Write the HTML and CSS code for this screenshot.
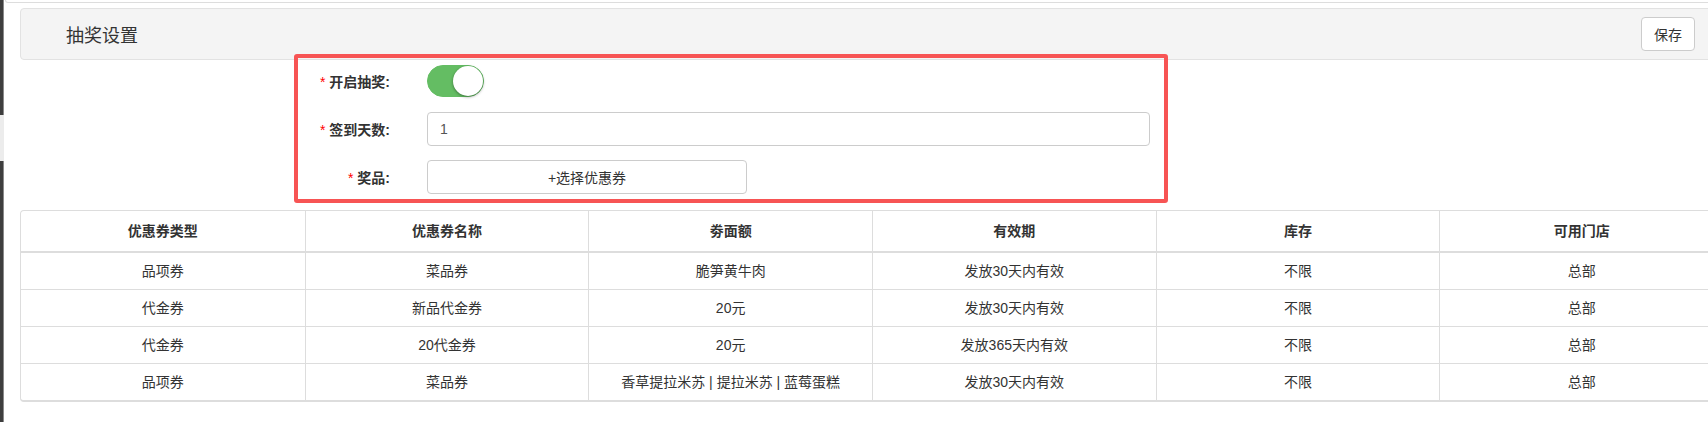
FILE: index.html
```html
<!DOCTYPE html>
<html lang="zh-CN">
<head>
<meta charset="UTF-8">
<meta name="viewport" content="width=device-width, initial-scale=1.0">
<title>抽奖设置</title>
<link rel="stylesheet" href="styles.css">
</head>
<body>

<div class="page">
    <div class="edge">
        <div class="edge-dark edge-top"></div>
        <div class="edge-gap"></div>
        <div class="edge-dark edge-rest"></div>
    </div>

    <div class="main">
        <div class="prev-box"></div>

        <div class="content">
            <div class="panel-head">
                <span class="panel-title">抽奖设置</span>
                <button type="button" class="btn-save">保存</button>
            </div>

            <form class="lottery-form">
                <div class="mark-box"></div>
                <div class="form-row">
                    <label class="form-label"><i>*</i> 开启抽奖:</label>
                    <div class="switch"><span class="knob"></span></div>
                </div>
                <div class="form-row">
                    <label class="form-label"><i>*</i> 签到天数:</label>
                    <input type="text" class="days-input" value="1">
                </div>
                <div class="form-row">
                    <label class="form-label"><i>*</i> 奖品:</label>
                    <button type="button" class="btn-pick">+选择优惠券</button>
                </div>
            </form>

            <div class="table-box">
                <table class="coupon-table">
                    <thead>
                        <tr>
                            <th>优惠券类型</th>
                            <th>优惠券名称</th>
                            <th>劵面额</th>
                            <th>有效期</th>
                            <th>库存</th>
                            <th>可用门店</th>
                        </tr>
                    </thead>
                    <tbody>
                        <tr>
                            <td>品项券</td>
                            <td>菜品券</td>
                            <td>脆笋黄牛肉</td>
                            <td>发放30天内有效</td>
                            <td>不限</td>
                            <td>总部</td>
                        </tr>
                        <tr>
                            <td>代金券</td>
                            <td>新品代金券</td>
                            <td>20元</td>
                            <td>发放30天内有效</td>
                            <td>不限</td>
                            <td>总部</td>
                        </tr>
                        <tr>
                            <td>代金券</td>
                            <td>20代金券</td>
                            <td>20元</td>
                            <td>发放365天内有效</td>
                            <td>不限</td>
                            <td>总部</td>
                        </tr>
                        <tr>
                            <td>品项券</td>
                            <td>菜品券</td>
                            <td>香草提拉米苏 | 提拉米苏 | 蓝莓蛋糕</td>
                            <td>发放30天内有效</td>
                            <td>不限</td>
                            <td>总部</td>
                        </tr>
                    </tbody>
                </table>
            </div>
        </div>
    </div>
</div>

</body>
</html>
```

FILE: styles.css
```css
html,
body {
    margin: 0;
    padding: 0;
    overflow: hidden;
}

body {
    font-family: "Liberation Sans", "Noto Sans CJK SC", sans-serif;
    font-size: 14px;
    color: #333;
    background-color: #fff;
}

.page {
    display: flex;
    width: 1728px;
    min-height: 422px;
}

/* dark strip of the side menu on the left */
.edge {
    width: 4px;
    flex-shrink: 0;
    display: flex;
    flex-direction: column;
}

.edge-dark {
    background-color: #3e3e3e;
    border-right: 1px solid #8a8a8a;
}

.edge-top {
    height: 115px;
}

.edge-gap {
    height: 46px;
    background-color: #ececec;
}

.edge-rest {
    flex: 1;
}

.main {
    flex: 1;
}

/* bottom of the box above this one */
.prev-box {
    height: 2px;
    margin-left: 1px;
    border: 1px solid #ddd;
    border-top: none;
    border-radius: 0 0 0 3px;
}

.content {
    width: 1704px;
    margin-left: 16px;
}

.panel-head {
    margin-top: 5px;
    height: 50px;
    padding: 0 28px 0 45px;
    display: flex;
    align-items: center;
    justify-content: space-between;
    background-color: #f4f4f4;
    border: 1px solid #e2e2e2;
    border-radius: 4px;
}

.panel-title {
    font-size: 18px;
    color: #333;
}

.btn-save {
    width: 54px;
    height: 34px;
    padding: 0;
    font-family: inherit;
    font-size: 14px;
    color: #333;
    background-color: #fff;
    border: 1px solid #ccc;
    border-radius: 4px;
    cursor: pointer;
}

.lottery-form {
    position: relative;
    margin: 0;
    padding: 4px 0 16px;
    display: flex;
    flex-direction: column;
    gap: 14px;
}

/* red highlight drawn over the form */
.mark-box {
    position: absolute;
    top: -6px;
    left: 274px;
    width: 874px;
    height: 149px;
    box-sizing: border-box;
    border: 4px solid #f75454;
    border-radius: 3px;
}

.form-row {
    height: 34px;
    display: flex;
    align-items: center;
}

.form-label {
    width: 370px;
    margin-right: 37px;
    text-align: right;
    font-weight: bold;
    color: #333;
}

.form-label i {
    font-style: normal;
    font-weight: normal;
    color: #f00;
}

.switch {
    position: relative;
    width: 55px;
    height: 30px;
    background-color: #64bd63;
    border: 1px solid #64bd63;
    border-radius: 16px;
    box-shadow: inset 0 0 0 16px #64bd63;
}

.switch .knob {
    position: absolute;
    top: 0;
    right: 0;
    width: 30px;
    height: 30px;
    border-radius: 50%;
    background-color: #fff;
    box-shadow: 0 1px 3px rgba(0, 0, 0, 0.4);
}

.days-input {
    width: 723px;
    height: 34px;
    box-sizing: border-box;
    padding: 6px 12px;
    font-family: inherit;
    font-size: 14px;
    color: #555;
    border: 1px solid #ccc;
    border-radius: 4px;
    outline: none;
}

.btn-pick {
    width: 320px;
    height: 34px;
    padding: 0;
    font-family: inherit;
    font-size: 14px;
    color: #333;
    background-color: #fff;
    border: 1px solid #ccc;
    border-radius: 4px;
    cursor: pointer;
}

.table-box {
    border: 1px solid #ddd;
    border-bottom-width: 2px;
    border-radius: 4px;
    overflow: hidden;
}

.coupon-table {
    width: 100%;
    table-layout: fixed;
    border-collapse: separate;
    border-spacing: 0;
}

.coupon-table th,
.coupon-table td {
    padding: 0;
    text-align: center;
    vertical-align: middle;
    white-space: nowrap;
}

.coupon-table th {
    height: 40px;
    line-height: 40px;
    font-weight: bold;
    border-bottom: 2px solid #ddd;
}

.coupon-table td {
    height: 36px;
    line-height: 36px;
}

.coupon-table tbody tr + tr td {
    border-top: 1px solid #ddd;
}

.coupon-table th + th,
.coupon-table td + td {
    border-left: 1px solid #ddd;
}
```
